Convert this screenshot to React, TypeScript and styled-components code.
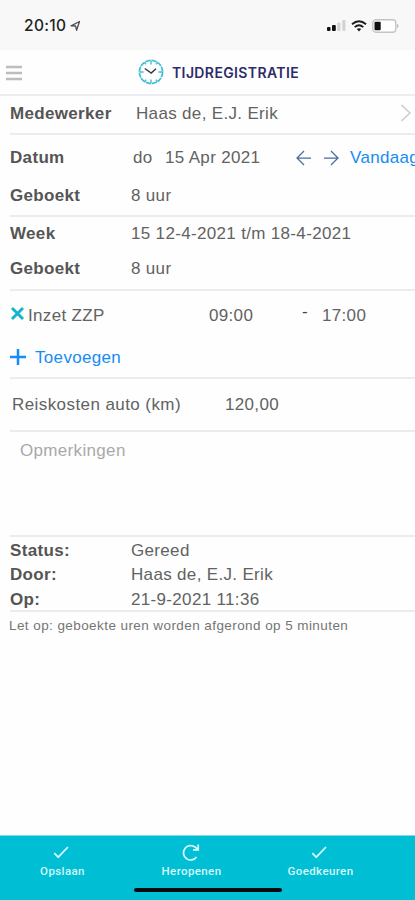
import React from "react";
import styled, { createGlobalStyle } from "styled-components";

const GlobalStyle = createGlobalStyle`
  * { box-sizing: border-box; }
  body { margin: 0; background: #fff; overflow: hidden; }
`;

const Screen = styled.div`
  width: 415px;
  height: 900px;
  display: flex;
  flex-direction: column;
  overflow: hidden;
  background: #fefefe;
  color: #626262;
  font: 17px/20px "Liberation Sans", Arial, sans-serif;
  letter-spacing: 0.33px;
  white-space: pre;
`;

const StatusBar = styled.header`
  height: 50px;
  flex: none;
  display: flex;
  align-items: center;
  padding: 1px 16px 0 24px;
  background: #f8f8f8;
`;

const Clock = styled.span`
  font: 500 15.5px/20px Inter, sans-serif;
  letter-spacing: 0.35px;
  color: #222;
  margin-right: 4px;
`;

const StatusIcons = styled.div`
  display: flex;
  align-items: center;
  margin-left: auto;
  gap: 5px;
`;

const TitleBar = styled.div`
  height: 46px;
  flex: none;
  display: grid;
  grid-template-columns: 132px auto 1fr;
  align-items: center;
  padding-left: 5px;
  border-bottom: 2px solid #ebeeef;
`;

const Title = styled.h1`
  margin: 1px 0 0 8px;
  font: 600 14px/20px Inter, sans-serif;
  letter-spacing: 0.38px;
  color: #2b2c6c;
`;

const Section = styled.section<{ $height: number }>`
  height: ${(p) => p.$height}px;
  flex: none;
  margin-left: 10px;
  border-bottom: 2px solid #ebecec;
`;

const Row = styled.div<{ $top: number; $columns?: string }>`
  display: grid;
  grid-template-columns: ${(p) => p.$columns ?? "121px 1fr"};
  align-items: start;
  padding-top: ${(p) => p.$top}px;
`;

const Label = styled.strong`
  font-weight: 700;
  color: #555;
`;

const Value = styled.span<{ $indent?: number; $spacing?: number }>`
  padding-left: ${(p) => p.$indent ?? 0}px;
  letter-spacing: ${(p) => p.$spacing ?? 0.33}px;
`;

const Dash = styled.span`
  color: #444;
  line-height: 12px;
`;

const LinkText = styled.span`
  color: #168cf5;
`;

const Placeholder = styled.div`
  padding: 9px 0 0 10px;
  color: #a9a9a9;
`;

const Note = styled.p`
  margin: 4px 0 0 9px;
  font-size: 13.5px;
  letter-spacing: 0.42px;
  color: #757575;
`;

const Footer = styled.footer`
  height: 65px;
  flex: none;
  margin-top: auto;
  background: #00bfd5;
  border-top: 1px solid #7fdce7;
`;

const Actions = styled.nav`
  height: 52px;
  display: grid;
  grid-template-columns: 125px 133px 125px;
`;

const Action = styled.div`
  display: flex;
  flex-direction: column;
  align-items: center;
  padding-top: 7px;
  font: 500 11.5px/18px Roboto, sans-serif;
  letter-spacing: 0.4px;
  color: #d5f8fb;
`;

const HomeIndicator = styled.div`
  width: 148px;
  height: 4px;
  margin-left: 134px;
  border-radius: 2px;
  background: #050b0c;
`;

const Icon = styled.svg<{ $top?: number; $left?: number }>`
  display: block;
  flex: none;
  fill: none;
  margin-top: ${(p) => p.$top ?? 0}px;
  margin-left: ${(p) => p.$left ?? 0}px;
`;

const CheckIcon = () => (
  <Icon width="20" height="19" viewBox="0 0 20 19" $left={-4} stroke="#d9fafc" strokeWidth="1.7">
    <path d="M3.3 10.2l3.9 4L17 4" />
  </Icon>
);

const ClockLogo = () => (
  <Icon width="26" height="26" viewBox="0 0 26 26" $left={1}>
    <circle cx="13" cy="13" r="11.6" stroke="#3fbcd8" strokeWidth="1.7" strokeDasharray="5.3 0.774" />
    <path d="M13 2v3.6M13 20.4V24M2 13h3.6M20.4 13H24M7 3.6l1 1.8M19 3.6l-1 1.8M7 22.4l1-1.8M19 22.4l-1-1.8" stroke="#43bdd8" strokeWidth="1.4" />
    <path d="M6.8 9.5l6.4 4.6 4.8-4.3" stroke="#333b40" strokeWidth="1.5" />
  </Icon>
);

export default function App() {
  return (
    <Screen>
      <GlobalStyle />
      <StatusBar>
        <Clock>20:10</Clock>
        <Icon width="11" height="12" viewBox="0 0 11 12" stroke="#505050" strokeWidth="1.3">
          <path d="M1 5.8L9.5 1.5 6.6 10.3 5.6 6z" strokeLinejoin="round" />
        </Icon>
        <StatusIcons>
          <Icon width="19" height="13" viewBox="0 0 19 13">
            <rect x="0" y="8" width="3.5" height="4" rx="1" fill="#111" />
            <rect x="5" y="6" width="3.8" height="6" rx="1" fill="#111" />
            <rect x="10.3" y="3.5" width="3.2" height="8.5" rx="1" fill="#d3d3d3" />
            <rect x="15.3" y="1" width="3.2" height="11" rx="1" fill="#d3d3d3" />
          </Icon>
          <Icon width="16" height="12" viewBox="0 0 16 12" stroke="#1c1c1c" strokeWidth="1.9">
            <path d="M1 4.3Q8-1.9 15 4.3M3.7 7.1Q8 3.3 12.3 7.1" />
            <path d="M5.8 9Q8 7.3 10.2 9L8 11.4z" fill="#1c1c1c" stroke="none" />
          </Icon>
          <Icon width="27" height="14" viewBox="0 0 27 14">
            <rect x=".8" y=".8" width="23" height="12.4" rx="3.2" stroke="#c4c4c4" strokeWidth="1.4" fill="#fff" />
            <rect x="2.5" y="2.7" width="6.2" height="8.6" rx="1" fill="#111" />
            <path d="M25 5v4.2q1.6-.6 1.6-2.1T25 5" fill="#bbb" />
          </Icon>
        </StatusIcons>
      </StatusBar>

      <TitleBar>
        <Icon width="18" height="16" viewBox="0 0 18 16" $top={1} stroke="#bdbdbd" strokeWidth="2.4">
          <path d="M1 2h16M1 8h16M1 14h16" />
        </Icon>
        <ClockLogo />
        <Title>TIJDREGISTRATIE</Title>
      </TitleBar>

      <Section $height={39}>
        <Row $top={8} $columns="121px 1fr 16px">
          <Label>Medewerker</Label>
          <Value $indent={5}>Haas de, E.J. Erik</Value>
          <Icon width="12" height="20" viewBox="0 0 12 20" $left={1} $top={-1} stroke="#c6cbd0" strokeWidth="1.4">
            <path d="M1.5 2l8.5 8-8.5 8" />
          </Icon>
        </Row>
      </Section>

      <Section $height={82}>
        <Row $top={13} $columns="121px 32px 131px 28px 28px 1fr">
          <Label>Datum</Label>
          <Value $indent={2}>do</Value>
          <Value $indent={2}>15 Apr 2021</Value>
          <Icon width="18" height="16" viewBox="0 0 18 16" $top={2} $left={1} stroke="#456f9d" strokeWidth="1.25">
            <path d="M16 8H2M9 1L2 8l7 7" />
          </Icon>
          <Icon width="18" height="16" viewBox="0 0 18 16" $top={2} $left={1} stroke="#456f9d" strokeWidth="1.25">
            <path d="M1 8h14M8 1l7 7-7 7" />
          </Icon>
          <LinkText>Vandaag</LinkText>
        </Row>
        <Row $top={18}>
          <Label>Geboekt</Label>
          <Value>8 uur</Value>
        </Row>
      </Section>

      <Section $height={74}>
        <Row $top={7}>
          <Label>Week</Label>
          <Value>15 12-4-2021 t/m 18-4-2021</Value>
        </Row>
        <Row $top={15}>
          <Label>Geboekt</Label>
          <Value>8 uur</Value>
        </Row>
      </Section>

      <Section $height={88}>
        <Row $top={15} $columns="18px 181px 93px 20px 1fr">
          <Icon width="15" height="15" viewBox="0 0 15 15" stroke="#12b5cd" strokeWidth="2.9">
            <path d="M2 2l11 11M13 2L2 13" />
          </Icon>
          <Value>Inzet ZZP</Value>
          <Value>09:00</Value>
          <Dash>-</Dash>
          <Value>17:00</Value>
        </Row>
        <Row $top={22} $columns="25px 1fr">
          <Icon width="16" height="16" viewBox="0 0 16 16" $top={1} stroke="#168cf5" strokeWidth="2.5">
            <path d="M8 0v16M0 8h16" />
          </Icon>
          <LinkText>Toevoegen</LinkText>
        </Row>
      </Section>

      <Section $height={53}>
        <Row $top={16} $columns="215px 1fr">
          <Value $indent={2} $spacing={0.42}>Reiskosten auto (km)</Value>
          <Value>120,00</Value>
        </Row>
      </Section>

      <Section $height={105}>
        <Placeholder>Opmerkingen</Placeholder>
      </Section>

      <Section $height={75}>
        <Row $top={4}>
          <Label>Status:</Label>
          <Value>Gereed</Value>
        </Row>
        <Row $top={4}>
          <Label>Door:</Label>
          <Value>Haas de, E.J. Erik</Value>
        </Row>
        <Row $top={5}>
          <Label>Op:</Label>
          <Value>21-9-2021 11:36</Value>
        </Row>
      </Section>
      <Note>Let op: geboekte uren worden afgerond op 5 minuten</Note>

      <Footer>
        <Actions>
          <Action>
            <CheckIcon />
            Opslaan
          </Action>
          <Action>
            <Icon width="20" height="19" viewBox="0 0 20 19" $left={-2} stroke="#d9fafc" strokeWidth="1.7">
              <path d="M15.5 14A7.2 7.2 0 1 1 14 4L17 6.5M17.2 1.5v5.4H12" />
            </Icon>
            Heropenen
          </Action>
          <Action>
            <CheckIcon />
            Goedkeuren
          </Action>
        </Actions>
        <HomeIndicator />
      </Footer>
    </Screen>
  );
}
